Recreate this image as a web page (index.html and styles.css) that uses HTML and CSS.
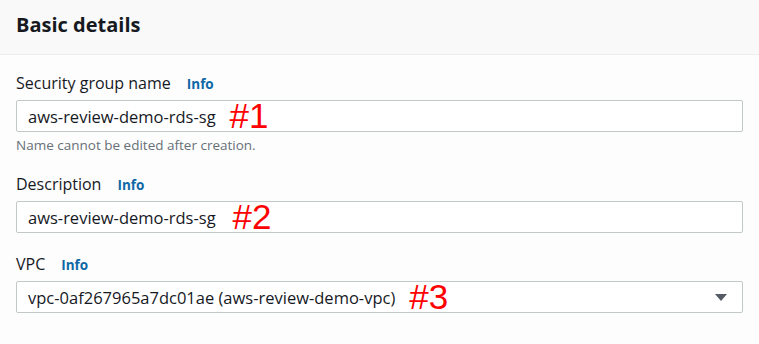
FILE: index.html
```html
<!DOCTYPE html>
<html lang="en">
<head>
    <meta charset="UTF-8">
    <title>Basic details</title>
    <link rel="stylesheet" href="styles.css">
</head>
<body>

<div class="panel">
    <div class="panel-header">
        <h2>Basic details</h2>
    </div>

    <div class="panel-body">
        <div class="field">
            <div class="label">Security group name <span class="info">Info</span></div>
            <div class="control">
                <span class="value">aws-review-demo-rds-sg</span>
                <span class="mark mark-1">#1</span>
            </div>
            <div class="hint">Name cannot be edited after creation.</div>
        </div>

        <div class="field">
            <div class="label">Description <span class="info">Info</span></div>
            <div class="control">
                <span class="value">aws-review-demo-rds-sg</span>
                <span class="mark mark-2">#2</span>
            </div>
        </div>

        <div class="field">
            <div class="label">VPC <span class="info">Info</span></div>
            <div class="control select">
                <span class="value">vpc-0af267965a7dc01ae (aws-review-demo-vpc)</span>
                <span class="mark mark-3">#3</span>
                <span class="caret"></span>
            </div>
        </div>
    </div>
</div>

</body>
</html>
```

FILE: styles.css
```css
body {
    margin: 0;
    font-family: "Open Sans", "Noto Sans", Arial, sans-serif;
    background-color: #fdfdfd;
    color: #16191f;
}
.panel {
    width: 759px;
    height: 344px;
    overflow: hidden;
}
.panel-header {
    background-color: #f9f9f9;
    border-bottom: 1px solid #eaeded;
    height: 55px;
    padding: 0 16px 6px 16px;
    box-sizing: border-box;
    display: flex;
    align-items: center;
}
.panel-header h2 {
    margin: 0;
    font-size: 20px;
    font-weight: 700;
    color: #16191f;
}
.panel-body {
    padding: 17px 16px 0 16px;
}
.field {
    margin-bottom: 20px;
}
.label {
    display: flex;
    align-items: baseline;
    height: 22px;
    font-size: 16px;
    line-height: 22px;
    margin-bottom: 6px;
}
.info {
    color: #0f68a6;
    font-size: 13.5px;
    font-weight: 700;
    margin-left: 16px;
}
.control {
    width: 727px;
    height: 32px;
    box-sizing: border-box;
    border: 1px solid #c2c7c7;
    border-radius: 2px;
    background: #fff;
    display: flex;
    align-items: center;
    padding: 0 11px;
}
.value {
    font-size: 16.5px;
    color: #16191f;
}
.mark {
    color: #ff0000;
    font-family: "Liberation Sans Narrow", "Liberation Sans", Arial, sans-serif;
    font-size: 35px;
    line-height: 30px;
    margin-left: 14px;
}
.mark-2 {
    margin-left: 17px;
}
.mark-3 {
    margin-left: 14px;
}
.caret {
    margin-left: auto;
    width: 0;
    height: 0;
    border-left: 6px solid transparent;
    border-right: 6px solid transparent;
    border-top: 7px solid #545b64;
    margin-right: 4px;
}
.hint {
    font-size: 13.5px;
    color: #687078;
    margin-top: 5px;
    line-height: 16px;
    height: 16px;
}
```
